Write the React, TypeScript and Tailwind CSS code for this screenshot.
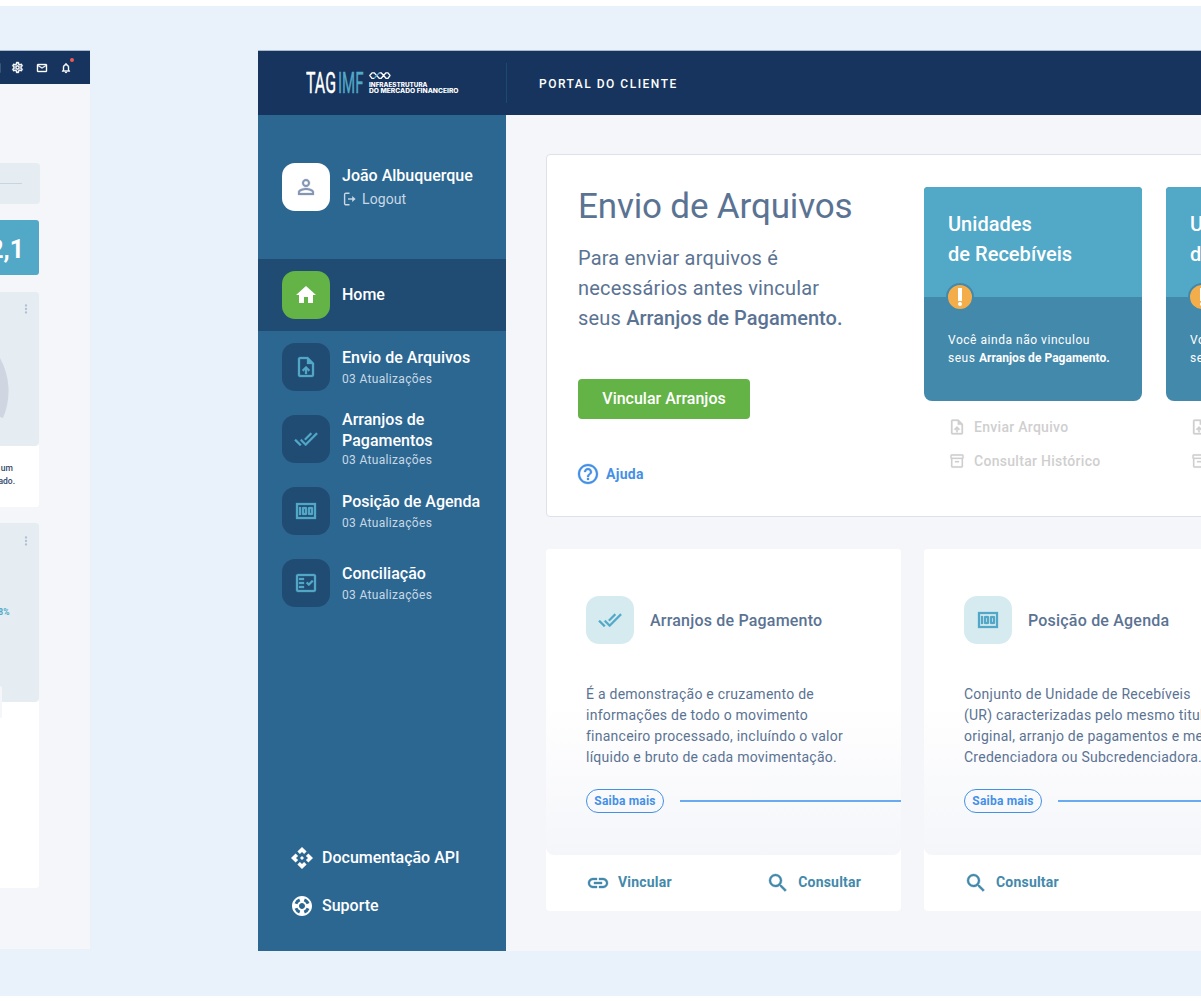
import React from "react";
import {
  MdApi,
  MdDoneAll,
  MdHelpOutline,
  MdHome,
  MdLink,
  MdMailOutline,
  MdMoreVert,
  MdOutlineFactCheck,
  MdOutlineInventory2,
  MdOutlineMoney,
  MdOutlineNotifications,
  MdOutlineSettings,
  MdOutlineUploadFile,
  MdPersonOutline,
  MdSearch,
  MdSupport,
} from "react-icons/md";

type IconType = React.ComponentType<{ className?: string }>;

function Logo() {
  return (
    <svg width="156" height="26" viewBox="0 0 156 26" className="shrink-0">
      <g fontFamily="Roboto, sans-serif" fontSize="29.5" fontWeight="400" strokeWidth="0.4">
        <text x="0" y="23.2" fill="#fff" stroke="#fff" textLength="30" lengthAdjust="spacingAndGlyphs">TAG</text>
        <text x="32" y="23.2" fill="#52a8c7" stroke="#52a8c7" textLength="25.5" lengthAdjust="spacingAndGlyphs">IMF</text>
      </g>
      <g fill="none" strokeWidth="1.3" strokeLinejoin="round">
        <path d="M68.4 8.3H66L63.8 5.5 66 2.8h2.2L70.8 5.6" stroke="#fff" />
        <path d="M68.2 8.3 73.4 2.8" stroke="#52a8c7" />
        <path d="M70.8 5.6 73.2 8.3h2L80 2.8h2L84 5.5 82 8.3h-2L75.2 2.8h-1.8" stroke="#fff" />
      </g>
      <g fontFamily="Inter, sans-serif" fontSize="5.9" fontWeight="800" fill="#fff">
        <text x="63" y="16.8" textLength="58.5" lengthAdjust="spacingAndGlyphs">INFRAESTRUTURA</text>
        <text x="63" y="23" textLength="89.5" lengthAdjust="spacingAndGlyphs">DO MERCADO FINANCEIRO</text>
      </g>
    </svg>
  );
}

function LogoutIcon() {
  return (
    <svg width="14" height="14" viewBox="0 0 14 14" fill="none" stroke="#c9d8e4" strokeWidth="1.4" className="shrink-0">
      <path d="M7.5 1.2H4A1.3 1.3 0 0 0 2.6 2.5v9A1.3 1.3 0 0 0 4 12.8h3.5" />
      <path d="M6 7h5" />
      <path d="M10.2 4.1 13.6 7 10.2 9.9z" fill="#c9d8e4" stroke="none" />
    </svg>
  );
}

function NavItem({ icon: Icon, lines }: { icon: IconType; lines: string[] }) {
  return (
    <a className="flex h-18 items-center gap-3 pl-6">
      <span className="flex size-12 shrink-0 items-center justify-center rounded-[13px] bg-[#204c73] text-[#52a8c7]">
        <Icon className="size-6 stroke-[0.3] [&_[fill=none]]:stroke-none" />
      </span>
      <span className="flex flex-col">
        {lines.map((line) => (
          <span key={line} className="text-[16px] leading-[21px] font-medium tracking-[0.02px] text-white">{line}</span>
        ))}
        <span className={lines.length > 1 ? "text-[12px] leading-[18px] tracking-[0.33px] text-[#c9d8e4]" : "mt-0.5 text-[12px] leading-[18px] tracking-[0.33px] text-[#c9d8e4]"}>
          03 Atualizações
        </span>
      </span>
    </a>
  );
}

function Sidebar() {
  return (
    <aside className="flex w-[248px] shrink-0 flex-col bg-[#2c6792]">
      <div className="flex h-36 items-center gap-3 pl-6">
        <span className="flex size-12 items-center justify-center rounded-[13px] bg-white text-[#8496b5]">
          <MdPersonOutline className="size-6 stroke-[0.3] [&_[fill=none]]:stroke-none" />
        </span>
        <div className="pt-px">
          <p className="text-[16px] leading-[23px] font-medium text-white">João Albuquerque</p>
          <p className="flex items-center gap-1.5 text-[14px] leading-6 tracking-[0.1px] text-[#c9d8e4]">
            <LogoutIcon />
            Logout
          </p>
        </div>
      </div>
      <a className="flex h-18 items-center gap-3 bg-[#204c73] pl-6">
        <span className="flex size-12 items-center justify-center rounded-[13px] bg-[#64b346] text-white">
          <MdHome className="size-6" />
        </span>
        <span className="text-[16px] leading-6 font-medium text-white">Home</span>
      </a>
      <NavItem icon={MdOutlineUploadFile} lines={["Envio de Arquivos"]} />
      <NavItem icon={MdDoneAll} lines={["Arranjos de", "Pagamentos"]} />
      <NavItem icon={MdOutlineMoney} lines={["Posição de Agenda"]} />
      <NavItem icon={MdOutlineFactCheck} lines={["Conciliação"]} />
      <div className="mt-auto flex flex-col gap-6 pb-[33px] pl-8 text-[16px] leading-6 font-medium text-white">
        <a className="flex gap-2">
          <MdApi className="size-6" />
          Documentação API
        </a>
        <a className="flex gap-2">
          <MdSupport className="size-6" />
          Suporte
        </a>
      </div>
    </aside>
  );
}

function UploadCard() {
  return (
    <div className="w-[218px] shrink-0">
      <div className="overflow-hidden rounded-t-[4px] rounded-b-[8px] bg-[#4389ab]">
        <h2 className="h-[110px] bg-[#52a8c7] px-6 pt-[22px] text-[20px] leading-[30px] font-medium tracking-[0.03px] text-white">
          Unidades
          <br />
          de Recebíveis
        </h2>
        <div className="h-[104px] pl-6">
          <span className="relative -top-[14px] -left-[2px] flex size-7 flex-col items-center justify-center gap-[1.5px] rounded-full border-2 border-[#4389ab] bg-[#f3ae4b]">
            <span className="h-[13px] w-1 bg-white" />
            <span className="size-1 rounded-full bg-white" />
          </span>
          <p className="mt-[6px] text-[12px] leading-[18px] tracking-[0.53px] whitespace-nowrap text-white">
            Você ainda não vinculou
            <br />
            seus <b className="font-bold tracking-[0.03px]">Arranjos de Pagamento.</b>
          </p>
        </div>
      </div>
      <div className="mt-[9px] flex flex-col pl-6 text-[14px] leading-[34px] font-medium tracking-[0.29px] whitespace-nowrap text-[#cfcfcf]">
        <a className="flex items-center gap-2">
          <MdOutlineUploadFile className="size-[18px] stroke-[0.4] [&_[fill=none]]:stroke-none" />
          Enviar Arquivo
        </a>
        <a className="flex items-center gap-2">
          <MdOutlineInventory2 className="size-[18px] stroke-[0.4] p-[1px] [&_[fill=none]]:stroke-none" />
          Consultar Histórico
        </a>
      </div>
    </div>
  );
}

function FileUploadPanel() {
  return (
    <section className="flex h-[363px] w-[900px] shrink-0 rounded-[4px] border border-[#dce1ea] bg-white pt-8 pl-[31px]">
      <div className="w-[346px] shrink-0 text-[#5b7393]">
        <h1 className="text-[35px] leading-[40px] tracking-[-0.16px]">Envio de Arquivos</h1>
        <p className="mt-4 text-[20px] leading-[30px] tracking-[0.18px]">
          Para enviar arquivos é
          <br />
          necessários antes vincular
          <br />
          seus <b className="font-medium tracking-[0.03px]">Arranjos de Pagamento.</b>
        </p>
        <button className="mt-[46px] flex h-10 w-[172px] items-center justify-center rounded-[4px] bg-[#64b346] text-[16px] font-medium text-white">
          Vincular Arranjos
        </button>
        <a className="mt-[43px] -ml-0.5 flex items-center gap-1.5 text-[14px] leading-6 font-bold tracking-[0.3px] text-[#4490e6]">
          <MdHelpOutline className="size-6 stroke-[0.3] [&_[fill=none]]:stroke-none" />
          Ajuda
        </a>
      </div>
      <div className="flex gap-6">
        <UploadCard />
        <UploadCard />
      </div>
    </section>
  );
}

function FeatureCard({ icon: Icon, title, lines, linkable }: { icon: IconType; title: string; lines: string[]; linkable?: boolean }) {
  return (
    <article className="flex h-[362px] w-[355px] shrink-0 flex-col overflow-hidden rounded-[4px] bg-white">
      <div className="h-[306px] rounded-b-[8px] bg-linear-to-b from-white from-50% to-[#f5f6fa] pt-[47px] pl-10">
        <div className="flex items-center gap-4">
          <span className="flex size-12 items-center justify-center rounded-[13px] bg-[#d6ebf0] text-[#52a8c7]">
            <Icon className="size-6 stroke-[0.3] [&_[fill=none]]:stroke-none" />
          </span>
          <h3 className="pt-0.5 text-[16px] leading-6 font-medium tracking-[0.2px] text-[#5b7393]">{title}</h3>
        </div>
        <p className="mt-10 text-[14px] leading-[21px] tracking-[0.25px] whitespace-nowrap text-[#5b7393]">
          {lines.map((line) => (
            <span key={line} className="block">{line}</span>
          ))}
        </p>
        <div className="mt-[21px] flex items-center gap-4">
          <a className="flex h-6 w-[78px] items-center justify-center rounded-full border border-[#4490e6] text-[12px] font-bold tracking-[0.2px] text-[#4490e6]">
            Saiba mais
          </a>
          <span className="h-0.5 flex-1 bg-[#6aaaf0]" />
        </div>
      </div>
      <div className="flex h-[55px] items-center justify-between px-10 text-[14px] font-bold tracking-[0.2px] text-[#4389ab]">
        {linkable && (
          <a className="flex items-center gap-2">
            <MdLink className="size-6 stroke-[0.4] [&_[fill=none]]:stroke-none" />
            Vincular
          </a>
        )}
        <a className="flex items-center gap-2">
          <MdSearch className="size-6 stroke-[0.4] [&_[fill=none]]:stroke-none" />
          Consultar
        </a>
      </div>
    </article>
  );
}

function ClientPortal() {
  return (
    <div className="ml-[168px] flex h-[901px] w-[1200px] shrink-0 flex-col border-t border-[#a9bacb] bg-[#f5f6fa]">
      <header className="flex h-16 shrink-0 items-center bg-[#16345d]">
        <div className="flex h-10 w-[249px] items-center border-r border-[#1d4a70] pl-12">
          <Logo />
        </div>
        <p className="pt-0.5 pl-8 text-[12px] font-medium tracking-[1.5px] text-white">PORTAL DO CLIENTE</p>
      </header>
      <div className="flex min-h-0 flex-1">
        <Sidebar />
        <main className="flex-1 pt-[39px] pl-10">
          <FileUploadPanel />
          <div className="mt-8 flex gap-[23px]">
            <FeatureCard
              icon={MdDoneAll}
              title="Arranjos de Pagamento"
              lines={[
                "É a demonstração e cruzamento de",
                "informações de todo o movimento",
                "financeiro processado, incluíndo o valor",
                "líquido e bruto de cada movimentação.",
              ]}
              linkable
            />
            <FeatureCard
              icon={MdOutlineMoney}
              title="Posição de Agenda"
              lines={[
                "Conjunto de Unidade de Recebíveis",
                "(UR) caracterizadas pelo mesmo titular",
                "original, arranjo de pagamentos e mesma",
                "Credenciadora ou Subcredenciadora.",
              ]}
            />
          </div>
        </main>
      </div>
    </div>
  );
}

function DashboardEdge() {
  return (
    <div className="flex h-[899px] w-[90px] shrink-0 flex-col overflow-hidden border-t border-[#a9bacb] bg-[#f5f6fa]">
      <header className="flex h-[33px] shrink-0 items-center justify-between bg-[#16345d] pr-[18px] text-white">
        <span className="h-2.5 w-px rounded-r-full bg-[#3a5679]" />
        <span className="flex items-center gap-[12px]">
          <MdOutlineSettings className="size-[13px] stroke-[0.8] [&_[fill=none]]:stroke-none" />
          <MdMailOutline className="size-[12px] stroke-[0.8] [&_[fill=none]]:stroke-none" />
          <span className="relative">
            <MdOutlineNotifications className="size-3 stroke-[0.8] [&_[fill=none]]:stroke-none" />
            <span className="absolute -top-1 -right-[2px] size-1 rounded-full bg-[#ee5a55]" />
          </span>
        </span>
      </header>
      <div className="mt-[79px] flex h-[41px] w-10 shrink-0 items-center rounded-r-[4px] bg-[#e5edf3]">
        <span className="h-px w-[22px] bg-[#c9d4de]" />
      </div>
      <div className="mt-4 flex h-[55px] w-[39px] shrink-0 items-center justify-end rounded-r-[3px] bg-[#52a8c7] pr-[15px] pt-[4px] text-[25px] font-bold whitespace-nowrap text-white">
        2,1
      </div>
      <div className="mt-[17px] w-[39px] shrink-0 overflow-hidden rounded-r-[3px] bg-white">
        <div className="flex h-[154px] justify-between rounded-br-[4px] bg-[#e5edf3]">
          <svg width="10" height="154" viewBox="0 0 10 154">
            <path d="M0 66A68 68 0 0 1 3 126L0 125z" fill="#cfd6e2" />
          </svg>
          <MdMoreVert className="mt-[10px] mr-[6px] size-[14px] text-[#b4c0d2]" />
        </div>
        <div className="flex h-[61px] w-[15px] flex-col items-end pt-4 text-[8.5px] leading-[12.5px] font-medium whitespace-nowrap text-[#33486b]">
          <span className="pr-[2px]">um</span>
          <span>ado.</span>
        </div>
      </div>
      <div className="mt-4 h-[365px] w-[39px] shrink-0 overflow-hidden rounded-r-[3px] bg-white">
        <div className="flex h-[179px] flex-col rounded-br-[4px] bg-[#e5edf3]">
          <MdMoreVert className="mt-[11px] ml-[19px] size-[14px] shrink-0 text-[#b4c0d2]" />
          <span className="mt-[58px] flex w-[9.5px] justify-end text-[8.5px] leading-[12px] font-bold text-[#52a8c7]">8%</span>
        </div>
        <div className="relative -top-4 h-8 w-0.5 rounded-r-[2px] bg-[#f5f6fa]" />
      </div>
    </div>
  );
}

export default function App() {
  return (
    <div className="h-[1001px] w-[1201px] overflow-hidden bg-white pt-1.5 font-['Roboto',sans-serif]">
      <div className="flex h-[990px] items-start bg-[#e9f1fb] pt-11">
        <DashboardEdge />
        <ClientPortal />
      </div>
    </div>
  );
}
